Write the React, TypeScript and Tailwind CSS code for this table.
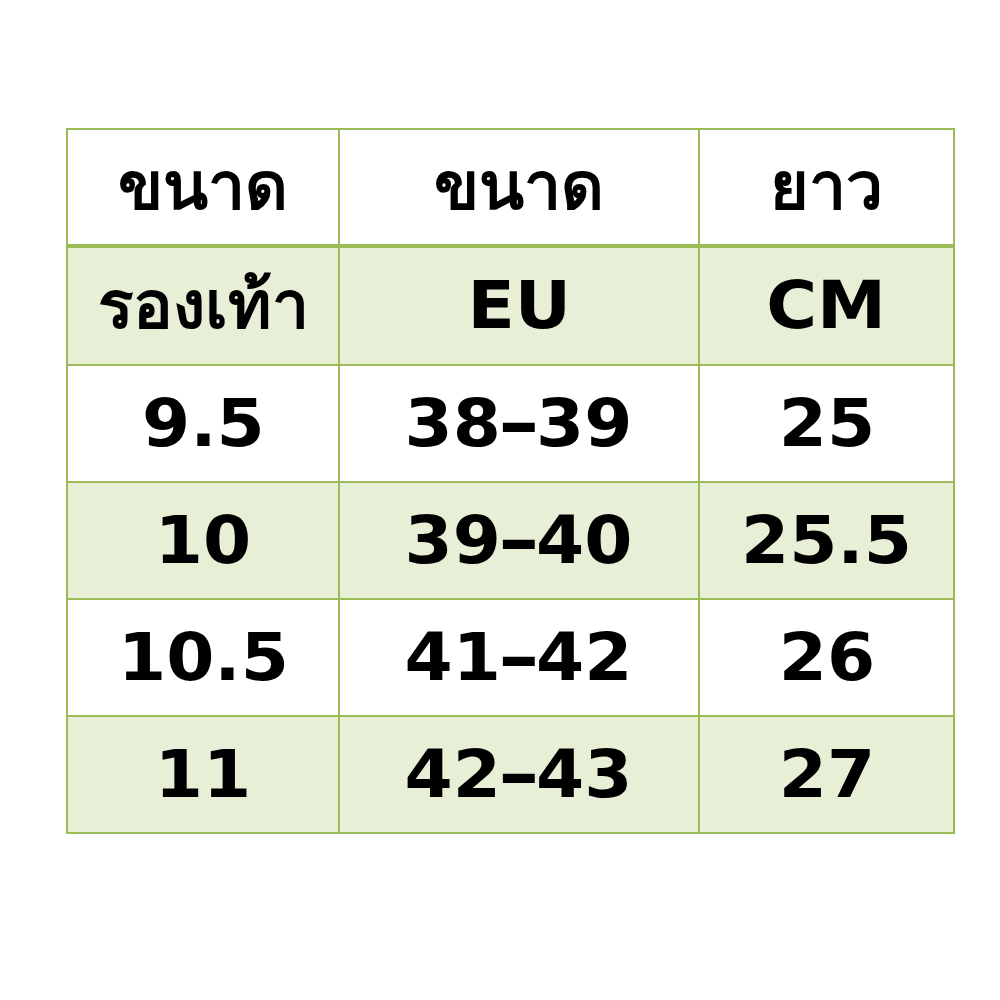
import React from "react"

const rows = [
  ["9.5", "38-39", "25"],
  ["10", "39-40", "25.5"],
  ["10.5", "41-42", "26"],
  ["11", "42-43", "27"],
]

const font = { fontFamily: '"DejaVu Sans", "Noto Sans", Tahoma, sans-serif' }

function Val({ v }: { v: string }) {
  const parts = v.split("-")
  if (parts.length === 1) return <>{v}</>
  return (
    <>
      {parts[0]}
      <span className="mx-[3px] inline-block scale-x-[1.5]">-</span>
      {parts[1]}
    </>
  )
}

function Cell({ children, thai = false, className = "" }: { children: React.ReactNode; thai?: boolean; className?: string }) {
  return (
    <td className={"border-2 border-[#9bbb59] p-0 text-center align-middle " + className}>
      <span
        className={
          "inline-block origin-center text-[66px] font-bold leading-none text-black " +
          (thai ? "scale-x-[1.0]" : "scale-x-[1.05]")
        }
      >
        {children}
      </span>
    </td>
  )
}

export default function App() {
  return (
    <div className="h-[1000px] w-[1000px] bg-white pt-[128px] pl-[66px]" style={font}>
      <table className="w-[887px] table-fixed border-collapse">
        <colgroup>
          <col className="w-[272px]" />
          <col className="w-[360px]" />
          <col className="w-[255px]" />
        </colgroup>
        <tbody>
          <tr className="h-[117px] bg-white">
            <Cell thai className="border-b-4">ขนาด</Cell>
            <Cell thai className="border-b-4">ขนาด</Cell>
            <Cell thai className="border-b-4">ยาว</Cell>
          </tr>
          <tr className="h-[119px] bg-[#e7efd7]">
            <Cell thai>รองเท้า</Cell>
            <Cell>EU</Cell>
            <Cell>CM</Cell>
          </tr>
          {rows.map((r, i) => (
            <tr key={r[0]} className={(i % 2 ? "bg-[#e7efd7]" : "bg-white") + " h-[117px]"}>
              {r.map((v, j) => (
                <Cell key={j}>
                  <Val v={v} />
                </Cell>
              ))}
            </tr>
          ))}
        </tbody>
      </table>
    </div>
  )
}
